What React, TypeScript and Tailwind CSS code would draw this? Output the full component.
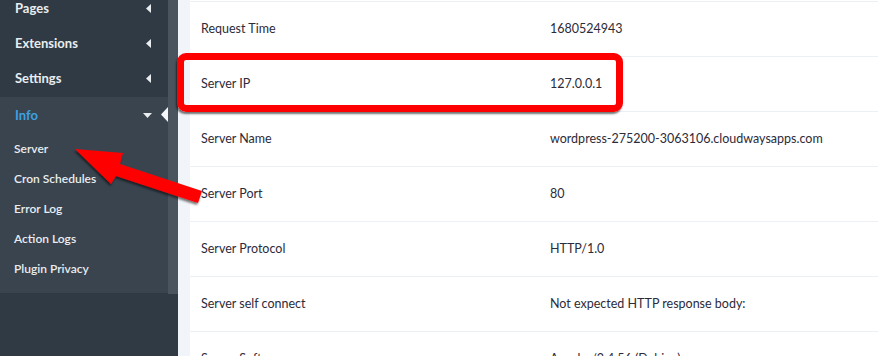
import React from "react";

const topItems = ["Pages", "Extensions", "Settings"];
const subItems = ["Server", "Cron Schedules", "Error Log", "Action Logs", "Plugin Privacy"];
const rows: [string, string][] = [
  ["Request Time", "1680524943"],
  ["Server IP", "127.0.0.1"],
  ["Server Name", "wordpress-275200-3063106.cloudwaysapps.com"],
  ["Server Port", "80"],
  ["Server Protocol", "HTTP/1.0"],
  ["Server self connect", "Not expected HTTP response body:"],
  ["Server Software", "Apache/2.4.56 (Debian)"],
];

function LeftCaret() {
  return (
    <svg width="6" height="9" viewBox="0 0 6 9" className="shrink-0">
      <polygon points="5,0 5,9 0,4.5" fill="#e9edf0" />
    </svg>
  );
}

export default function App() {
  return (
    <div
      className="relative flex h-[356px] w-[878px] overflow-hidden bg-white"
      style={{ fontFamily: "Lato, 'Open Sans', sans-serif" }}
    >
      {/* Sidebar */}
      <div className="flex w-[168px] shrink-0 flex-col bg-[#2f3a45]">
        <div className="mt-[-9px] flex flex-col">
          {topItems.map((t) => (
            <div key={t} className="flex h-[35px] items-center justify-between pl-[15px] pr-[16px]">
              <span className="text-[13px] font-bold text-[#e9edf0]">{t}</span>
              <LeftCaret />
            </div>
          ))}
        </div>
        <div className="mt-[1px] flex flex-col bg-[#39444f] pb-[9px]">
          <div className="relative flex h-[37px] items-center justify-between pl-[15px] pr-[16px]">
            <span className="text-[13px] font-bold text-[#3ea0e4]">Info</span>
            <svg width="9" height="5" viewBox="0 0 9 5">
              <polygon points="0,0 9,0 4.5,5" fill="#e9edf0" />
            </svg>
            <svg width="7" height="15" viewBox="0 0 7 15" className="absolute right-0 top-[10px]">
              <polygon points="7,0 7,15 0,7.5" fill="#f4f6fa" />
            </svg>
          </div>
          {subItems.map((t) => (
            <div key={t} className="flex h-[30px] items-center pl-[14px]">
              <span className="text-[12px] font-semibold text-[#e9edf0]">{t}</span>
            </div>
          ))}
        </div>
      </div>
      {/* scrollbar strip */}
      <div className="flex w-[10px] shrink-0 flex-col bg-[#2f3a45]">
        <div className="h-[294px] bg-[#4a545e]" />
      </div>
      {/* light gutter */}
      <div className="w-[12px] shrink-0 bg-[#f1f4f9]" />
      {/* content */}
      <div className="flex min-w-0 flex-1 flex-col bg-white pt-[1px] text-[12.5px] text-[#2c2b3a]">
        {rows.map(([k, v]) => (
          <div key={k} className="flex h-[55px] shrink-0 items-center border-t border-[#eceff4]">
            <div className="w-[360px] shrink-0 pl-[11px]">{k}</div>
            <div className="whitespace-nowrap">{v}</div>
          </div>
        ))}
      </div>

      {/* Highlight box */}
      <div className="absolute left-[177px] top-[53px] h-[59px] w-[446px] rounded-[9px] border-[7px] border-[#ff0000] shadow-[-1px_2px_2px_rgba(0,0,0,0.55)]" />

      {/* Arrow */}
      <svg className="pointer-events-none absolute left-0 top-0" width="878" height="356" viewBox="0 0 878 356">
        <defs>
          <filter id="sh" x="-10%" y="-10%" width="130%" height="130%">
            <feDropShadow dx="-1" dy="2" stdDeviation="1" floodColor="#000" floodOpacity="0.55" />
          </filter>
        </defs>
        <polygon
          points="75,149 123,153 120,164 202,191 198,203 116,176 111,184"
          fill="#ff0000"
          filter="url(#sh)"
        />
      </svg>
    </div>
  );
}
